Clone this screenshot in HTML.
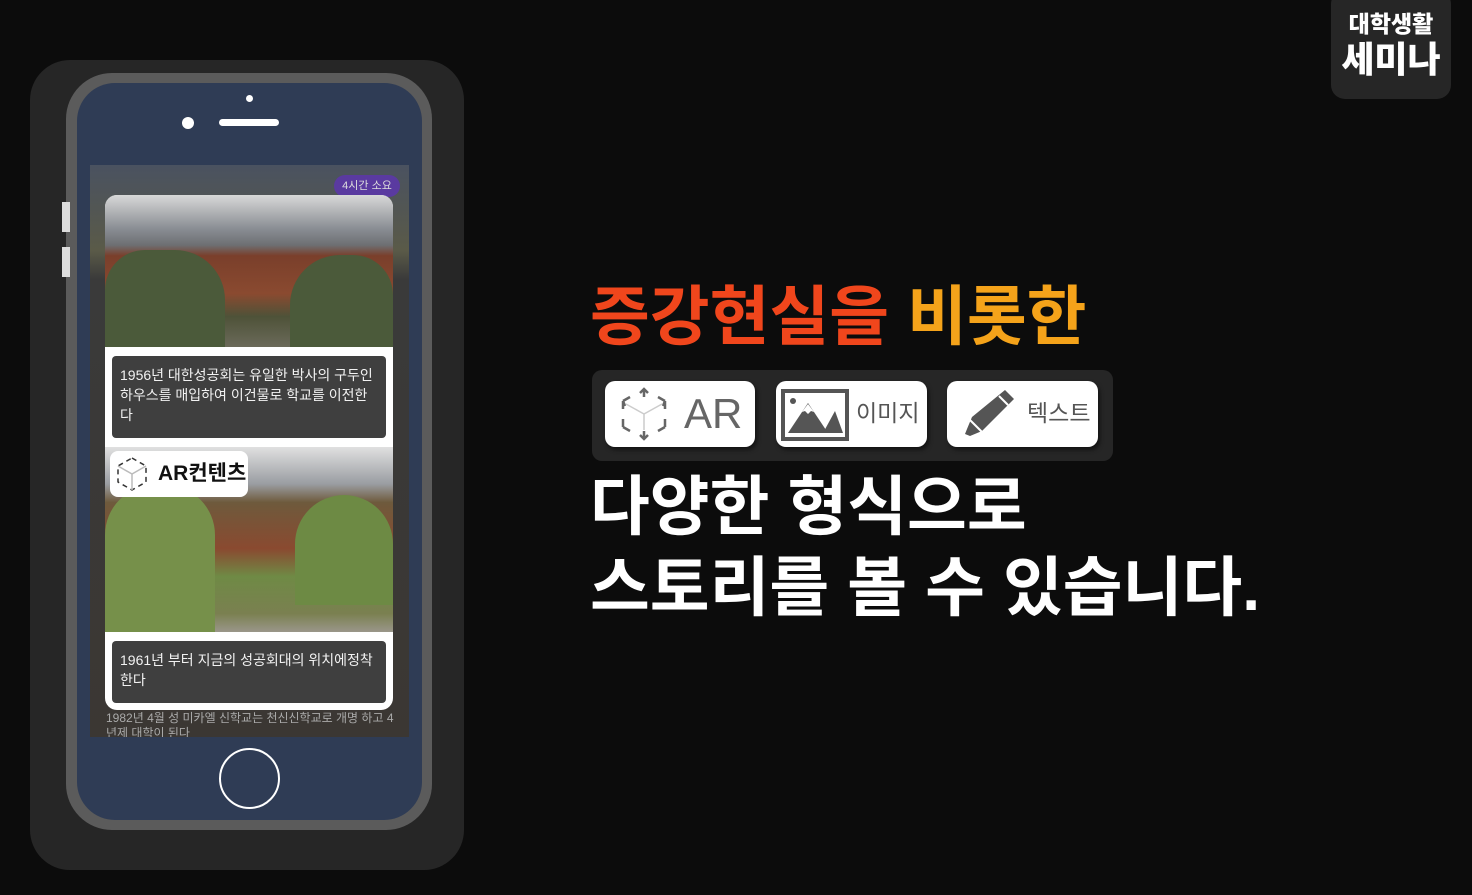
<!DOCTYPE html>
<html><head><meta charset="utf-8"><style>
*{margin:0;padding:0;box-sizing:border-box}
body{width:1472px;height:895px;background:#0c0c0c;position:relative;overflow:hidden;font-family:"Liberation Sans","Noto Sans CJK KR",sans-serif}
.a{position:absolute}
.big{font-weight:700;font-size:65px;letter-spacing:0;line-height:1;white-space:nowrap}
.btn{position:absolute;top:381px;height:66px;background:#fff;border-radius:10px;box-shadow:2px 3px 4px rgba(0,0,0,.5)}
.cap{position:absolute;left:112px;width:274px;background:#3f3f3f;border-radius:4px;color:#f2f2f2;font-size:14px;line-height:20px;padding:9px 8px}
</style></head><body>
<div class="a" style="left:30px;top:60px;width:434px;height:810px;background:#262626;border-radius:40px"></div>
<div class="a" style="left:66px;top:73px;width:366px;height:757px;background:#5b5b5b;border-radius:46px"></div>
<div class="a" style="left:77px;top:83px;width:345px;height:737px;background:#2f3c55;border-radius:38px"></div>
<div class="a" style="left:62px;top:202px;width:8px;height:30px;background:#ddd"></div>
<div class="a" style="left:62px;top:247px;width:8px;height:30px;background:#ddd"></div>
<div class="a" style="left:246px;top:95px;width:7px;height:7px;background:#fff;border-radius:50%"></div>
<div class="a" style="left:182px;top:117px;width:12px;height:12px;background:#fff;border-radius:50%"></div>
<div class="a" style="left:219px;top:119px;width:60px;height:7px;background:#fff;border-radius:4px"></div>
<div class="a" style="left:219px;top:748px;width:61px;height:61px;border:2px solid #fff;border-radius:50%"></div>
<div class="a" style="left:90px;top:165px;width:319px;height:572px;background:linear-gradient(#4a5260 0,#5a5a48 15%,#3a3a3a 20%,#3b3733 100%)"></div>
<div class="a" style="left:334px;top:175px;width:66px;height:22px;background:#5a3aa0;border-radius:11px;color:#ddd;font-size:11px;text-align:center;line-height:22px">4시간 소요</div>
<div class="a" style="left:106px;top:711px;width:290px;color:#aaa;font-size:12px;line-height:15px;height:26px;overflow:hidden">1982년 4월 성 미카엘 신학교는 천신신학교로 개명 하고 4년제 대학이 된다</div>
<div class="a" style="left:105px;top:195px;width:288px;height:515px;background:#fff;border-radius:12px;overflow:hidden">
 <div class="a" style="left:0;top:0;width:288px;height:152px;background:linear-gradient(#d8d8d8 0,#8a8e94 22%,#6d6f72 33%,#7a3f2b 40%,#8a4a30 65%,#4e5238 80%,#6b6a5a 100%)"></div>
 <div class="a" style="left:0;top:55px;width:120px;height:97px;background:#4b5a3a;border-radius:40px 50px 0 0"></div>
 <div class="a" style="left:185px;top:60px;width:103px;height:92px;background:#4b5a3a;border-radius:50px 40px 0 0"></div>
 <div class="a" style="left:0;top:252px;width:288px;height:185px;background:linear-gradient(#e0e0e0 0,#9a9da2 20%,#6e5a3c 30%,#8a4a30 55%,#6f8a45 70%,#7a8050 90%,#9a968a 100%)"></div>
 <div class="a" style="left:0;top:290px;width:110px;height:147px;background:#76904a;border-radius:50px 50px 0 0"></div>
 <div class="a" style="left:190px;top:300px;width:98px;height:110px;background:#6d8a44;border-radius:50px 50px 0 0"></div>
</div>
<div class="cap" style="top:356px;height:82px">1956년 대한성공회는 유일한 박사의 구두인 하우스를 매입하여 이건물로 학교를 이전한다</div>
<div class="cap" style="top:641px;height:62px">1961년 부터 지금의 성공회대의 위치에정착 한다</div>
<div class="a" style="left:110px;top:451px;width:138px;height:46px;background:#fff;border-radius:8px;font-weight:700;font-size:21px;line-height:46px;padding-left:48px;color:#111">AR컨텐츠</div>
<svg class="a" style="left:115px;top:456px" width="34" height="36" viewBox="0 0 34 36" fill="none" stroke="#333" stroke-width="1.5"><path d="M17 2l14 8v16l-14 8-14-8V10z" stroke-dasharray="5 4"/><path d="M17 18v16M17 18L3 10M17 18l14-8" stroke="#bbb"/></svg>
<div class="a" style="left:1331px;top:-10px;width:120px;height:109px;background:#262626;border-radius:14px"></div>
<div class="a" style="left:1331px;top:10px;width:120px;text-align:center;color:#fff;font-weight:900;font-size:23px;line-height:28px">대학생활</div>
<div class="a" style="left:1331px;top:40px;width:120px;text-align:center;color:#fff;font-weight:900;font-size:36px;line-height:40px">세미나</div>
<div class="a big" style="left:590px;top:284px"><span style="color:#f0461c">증강현실을</span> <span style="color:#f5a31a">비롯한</span></div>
<div class="a" style="left:592px;top:370px;width:521px;height:91px;background:#262626;border-radius:10px"></div>
<div class="btn" style="left:605px;width:150px"></div>
<div class="btn" style="left:776px;width:151px"></div>
<div class="btn" style="left:947px;width:151px"></div>
<svg class="a" style="left:618px;top:386px" width="52" height="56" viewBox="0 0 52 56" fill="none" stroke="#666" stroke-width="2.5"><path d="M26 3v8M22 7l4-4 4 4M5 15l7-4M5 15v8M5 15l2 5M47 15l-7-4M47 15v8M47 15l-2 5M5 41v-8M5 41l7 4M47 41v-8M47 41l-7 4M26 53v-8M22 49l4 4 4-4"/><path d="M26 28v16M26 28L8 18M26 28l18-10" stroke="#ccc" stroke-width="1.5"/></svg>
<div class="a" style="left:684px;top:390px;font-size:42px;color:#666;line-height:48px">AR</div>
<svg class="a" style="left:781px;top:389px" width="68" height="52" viewBox="0 0 68 52"><rect x="2" y="2" width="64" height="48" fill="none" stroke="#555" stroke-width="4"/><circle cx="12" cy="12" r="3" fill="#555"/><path d="M7 44l20-30 20 30z" fill="#555"/><path d="M21 23l6-8 6 8-3-1-3 3-3-3z" fill="#fff"/><path d="M42 44l12-22 8 22z" fill="#555"/></svg>
<div class="a" style="left:856px;top:397px;font-size:23px;color:#555;line-height:32px">이미지</div>
<svg class="a" style="left:961px;top:387px" width="56" height="56" viewBox="0 0 56 56"><path d="M44 3l9 9-32 32-12 5-5-2 2-5 5-12z" fill="#555"/><path d="M9 33l12 12" stroke="#fff" stroke-width="2"/><path d="M38 9l9 9" stroke="#fff" stroke-width="2"/></svg>
<div class="a" style="left:1027px;top:397px;font-size:23px;color:#555;line-height:32px">텍스트</div>
<div class="a big" style="left:590px;top:474px;color:#fff">다양한 형식으로</div>
<div class="a big" style="left:590px;top:555px;color:#fff">스토리를 볼 수 있습니다.</div>
</body></html>
